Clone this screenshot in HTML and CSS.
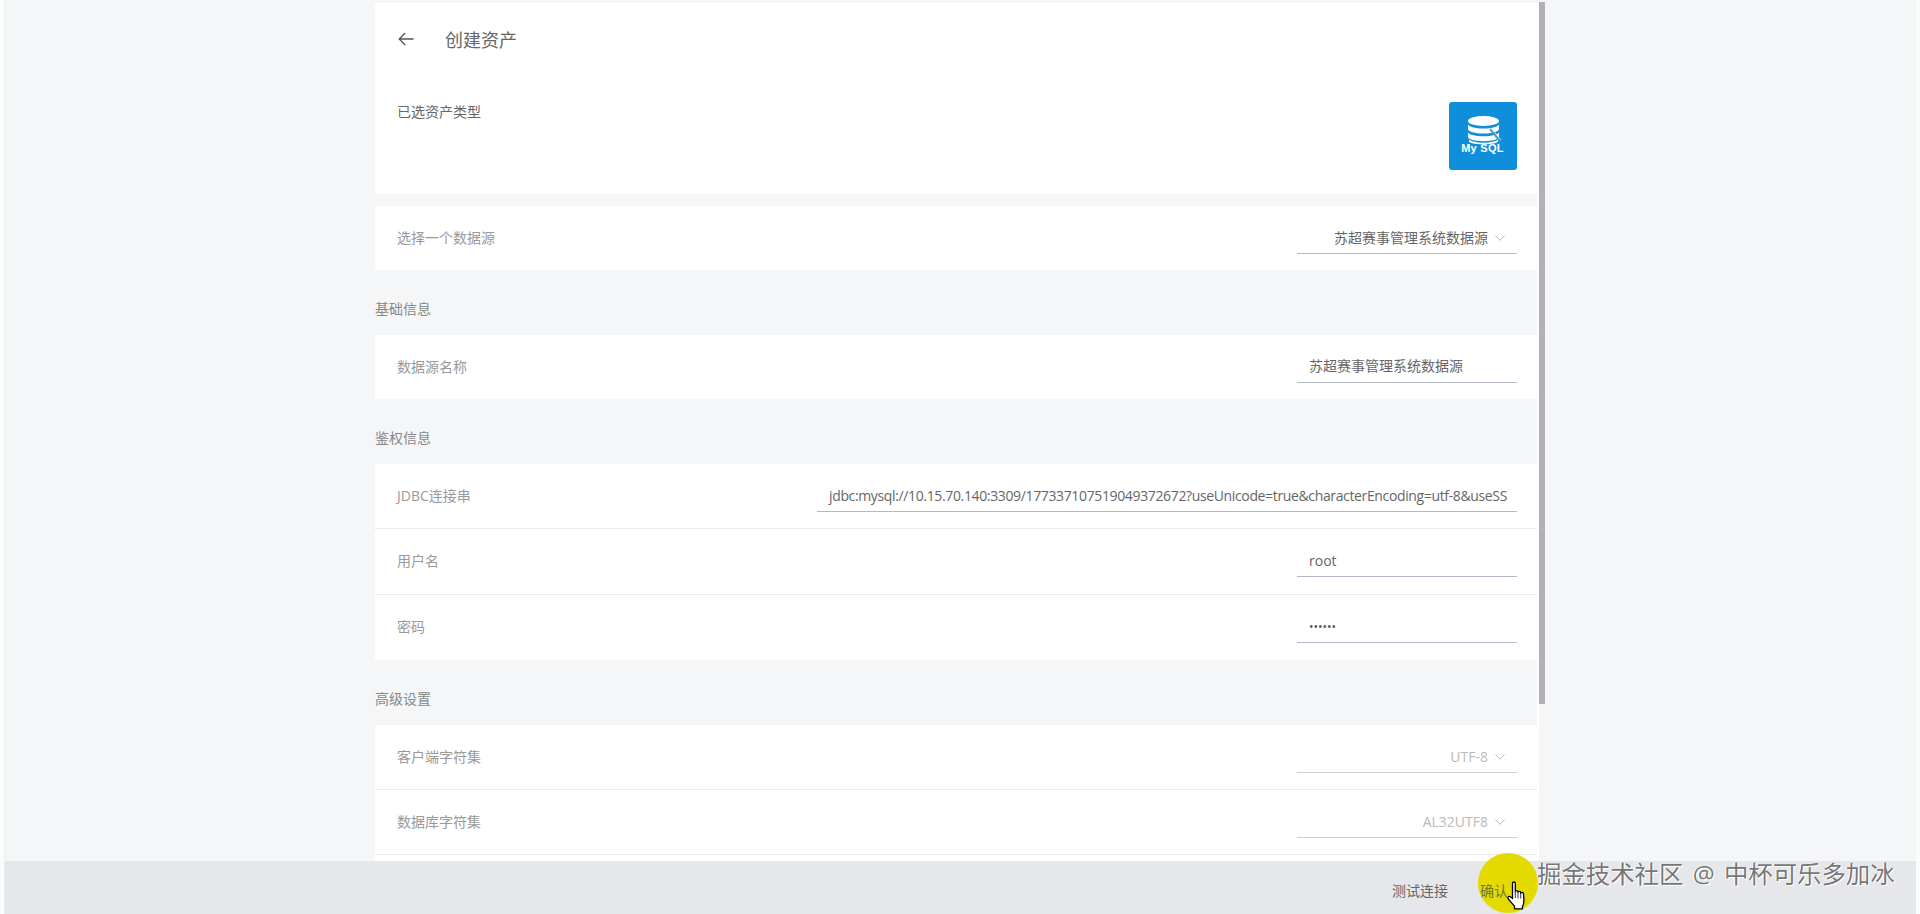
FILE: index.html
```html
<!DOCTYPE html>
<html lang="zh-CN">
<head>
<meta charset="utf-8">
<title>创建资产</title>
<link rel="stylesheet" href="styles.css">
</head>
<body>
<div class="app">
  <main class="main">
    <div class="column">
      <section class="card head-card">
        <header class="page-head">
          <svg class="back" width="16" height="14" viewBox="0 0 16 14"><path d="M7.2 1 1.2 7l6 6M1.2 7H15.6" fill="none" stroke="#555" stroke-width="1.3"/></svg>
          <h1 class="page-title">创建资产</h1>
        </header>
        <div class="type-row">
          <span class="type-label">已选资产类型</span>
          <svg class="logo" width="68" height="68" viewBox="0 0 68 68">
            <rect width="68" height="68" rx="3" fill="#0f8fd9"/>
            <path d="M19 22v5c0 2.500 7 4.500 15.500 4.500S50 29.500 50 27v-5c0 2.500-7 4.500-15.500 4.500S19 24.500 19 22Z" fill="#fff"/>
            <ellipse cx="34.500" cy="19" rx="15.500" ry="5" fill="#fff"/>
            <path d="M19 30v5c0 2.300 7 4.200 15.500 4.200S50 37.300 50 35v-5c0 2.500-7 4.300-15.500 4.300S19 32.500 19 30Z" fill="#fff"/>
            <path d="M20 37.500v2c0 1.500 6.500 2.800 14.500 2.800S49 41 49 39.500v-2c-2 2-8 3.200-14.500 3.200S22 39.500 20 37.500Z" fill="#fff"/>
            <path d="M41 27l10 12" stroke="#3a9fdc" stroke-width="2" fill="none"/>
            <path d="M43 27l9 11" stroke="#d5edfa" stroke-width=".8" fill="none"/>
            <text class="logo-text" x="33.500" y="50" text-anchor="middle">My SQL</text>
          </svg>
        </div>
      </section>

      <section class="card single">
        <div class="row">
          <span class="label">选择一个数据源</span>
          <div class="field select"><span>苏超赛事管理系统数据源</span><svg class="chev" width="10" height="6" viewBox="0 0 10 6"><path d="M.5.5 5 5.300 9.500.5" fill="none" stroke="#bbb"/></svg></div>
        </div>
      </section>

      <h2 class="section-title">基础信息</h2>
      <section class="card single">
        <div class="row">
          <span class="label">数据源名称</span>
          <div class="field">苏超赛事管理系统数据源</div>
        </div>
      </section>

      <h2 class="section-title">鉴权信息</h2>
      <section class="card">
        <div class="row tall">
          <span class="label">JDBC连接串</span>
          <div class="field wide latin"><span class="clip">jdbc:mysql://10.15.70.140:3309/177337107519049372672?useUnicode=true&amp;characterEncoding=utf-8&amp;useSS</span></div>
        </div>
        <div class="row tall">
          <span class="label">用户名</span>
          <div class="field latin">root</div>
        </div>
        <div class="row tall last">
          <span class="label">密码</span>
          <div class="field dots latin">••••••</div>
        </div>
      </section>

      <h2 class="section-title">高级设置</h2>
      <section class="card">
        <div class="row tall">
          <span class="label">客户端字符集</span>
          <div class="field select off"><span>UTF-8</span><svg class="chev" width="10" height="6" viewBox="0 0 10 6"><path d="M.5.5 5 5.300 9.500.5" fill="none" stroke="#bbb"/></svg></div>
        </div>
        <div class="row tall">
          <span class="label">数据库字符集</span>
          <div class="field select off"><span>AL32UTF8</span><svg class="chev" width="10" height="6" viewBox="0 0 10 6"><path d="M.5.5 5 5.300 9.500.5" fill="none" stroke="#bbb"/></svg></div>
        </div>
        <div class="row tall"></div>
      </section>
    </div>
    <div class="thumb"></div>
  </main>
  <footer class="footer">
    <button class="btn">测试连接</button>
    <button class="btn primary">确认</button>
  </footer>
</div>
<div class="highlight"></div>
<svg class="cursor" width="20" height="30" viewBox="0 0 20 30">
  <path d="M5.500 2.200c0-1.600 2.800-1.600 2.800 0v8.300c0-1.300 2.700-1.300 2.700 0v.8c0-1.300 2.700-1.300 2.700 0v1c0-1.200 2.700-1.200 2.700.2.400 3 .6 7 .3 9.500-.2 1.600-.8 2.600-1.300 3.800v2H7.500v-2.600C5.500 23 3.500 20.500 1.400 18c-1.300-1.600.4-3.400 2-2.300l2.100 1.800Z" fill="#fff" stroke="#000" stroke-width="1.300" stroke-linejoin="round"/>
  <path d="M8.300 11v6M11 11.500v6M13.700 12.500v5" stroke="#000" stroke-width=".8" fill="none"/>
</svg>
<div class="watermark">掘金技术社区 @ 中杯可乐多加冰</div>
</body>
</html>
```

FILE: styles.css
```css
* { box-sizing: border-box; }
html, body { margin: 0; height: 100%; overflow: hidden; background: #fbfcfc; }
body {
  font-family: "Open Sans", "Noto Sans CJK SC", sans-serif;
  font-size: 14px;
  color: #666;
}
.app {
  height: 914px;
  margin: 0 4px;
  display: flex;
  flex-direction: column;
  border-left: 1px solid #eceef0;
}
.main {
  flex: 1;
  min-height: 0;
  overflow: hidden;
  display: flex;
  padding: 3px 0 0 370px;
  background: #f4f6f8;
}
.column {
  width: 1164px;
  height: 100%;
  flex: none;
  border-right: 2px solid #fff;
}
.card { background: #fff; border-radius: 2px; }
.head-card { height: 191px; margin-bottom: 12px; }
.page-head { display: flex; align-items: center; height: 72px; padding-left: 23px; }
.back { flex: none; }
.page-title { margin: 0 0 0 31px; font-size: 18px; font-weight: 400; color: #666; }
.type-row {
  display: flex;
  justify-content: space-between;
  align-items: flex-start;
  padding: 27px 20px 0 22px;
}
.type-label { color: #666; line-height: 20px; }
.logo { display: block; }
.logo-text { font: 700 11px "Liberation Sans", sans-serif; letter-spacing: .3px; fill: #fff; }
.section-title {
  margin: 0;
  height: 65px;
  padding-top: 29px;
  line-height: 20px;
  font-size: 14px;
  font-weight: 400;
  color: #888;
}
.row {
  height: 64px;
  display: flex;
  align-items: center;
  justify-content: space-between;
  padding: 0 20px 0 22px;
  border-bottom: 1px solid #e8eaed;
}
.single .row { border-bottom: 0; }
.row.tall { height: 65.300px; }
.row.last { border-bottom: 0; }
.label { color: #999; flex: none; margin-bottom: 2px; }
.field {
  width: 220px;
  height: 32px;
  line-height: 30px;
  padding: 0 12px;
  flex: none;
  color: #666;
  border-bottom: 1px solid #b4b9ca;
  white-space: nowrap;
}
.field.latin { line-height: 32px; }
.field.wide { width: 700px; }
.clip { display: block; letter-spacing: -0.360px; }
.field.dots { font-size: 12px; color: #555; }
.field.select {
  display: flex;
  justify-content: flex-end;
  align-items: center;
  gap: 7px;
}
.field.off { color: #bbb; border-bottom-color: #ccced4; }
.chev { flex: none; }
.thumb {
  width: 6px;
  height: 702px;
  margin-top: -1px;
  flex: none;
  background: #b1b2b6;
}
.footer {
  position: relative;
  height: 53px;
  flex: none;
  display: flex;
  justify-content: flex-end;
  align-items: center;
  gap: 32px;
  padding: 0 408px 0 0;
  background: #e6e7ea;
}
.btn {
  border: 0;
  padding: 0;
  background: none;
  font: inherit;
  color: #666;
  margin-top: 5px;
}
.btn.primary { color: #6a7a30; position: relative; z-index: 3; }
.highlight {
  position: absolute;
  left: 1478px;
  top: 853px;
  width: 60px;
  height: 60px;
  border-radius: 50%;
  background: #e4d900;
}
.cursor { position: absolute; left: 1507px; top: 881px; }
.watermark {
  position: absolute;
  left: 1537px;
  top: 856px;
  font-size: 24.400px;
  line-height: 36px;
  white-space: nowrap;
  word-spacing: 3px;
  color: #777;
  text-shadow: 1px 1px 0 #fff, -1px 0 0 #fff;
}
```
